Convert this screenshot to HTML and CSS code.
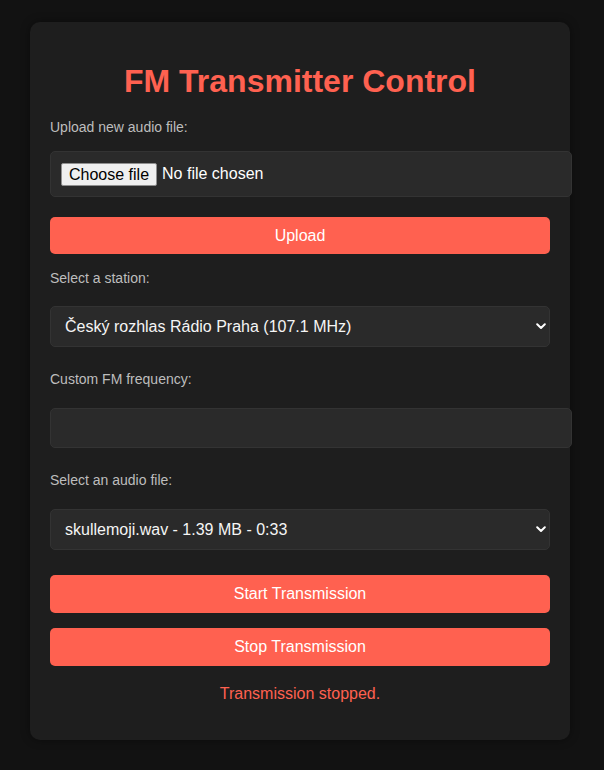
FILE: index.html
```html
<!DOCTYPE html>
<html lang="en">
<head>
<meta charset="utf-8">
<title>FM Transmitter Control</title>
<link rel="stylesheet" href="styles.css">
</head>
<body>
<div class="card">
  <h1 class="title">FM Transmitter Control</h1>

  <label class="label label-upload" for="file">Upload new audio file:</label>
  <label class="field file-field">
    <input type="file" id="file" class="file-input">
    <span class="file-btn">Choose file</span><span class="file-name">No file chosen</span>
  </label>
  <button class="btn btn-upload">Upload</button>

  <label class="label label-station" for="station">Select a station:</label>
  <div class="select-wrap select-station">
    <select id="station" class="field select">
      <option>Český rozhlas Rádio Praha (107.1 MHz)</option>
    </select>
    <svg class="chevron" viewBox="0 0 10 7" width="10" height="7" aria-hidden="true"><path d="M1.2 1.3 L5 5 L8.8 1.3" fill="none" stroke="#fff" stroke-width="2" stroke-linecap="round" stroke-linejoin="round"/></svg>
  </div>

  <label class="label label-freq" for="freq">Custom FM frequency:</label>
  <input type="text" id="freq" class="field text-field">

  <label class="label label-audio" for="audio">Select an audio file:</label>
  <div class="select-wrap select-audio">
    <select id="audio" class="field select">
      <option>skullemoji.wav - 1.39 MB - 0:33</option>
    </select>
    <svg class="chevron" viewBox="0 0 10 7" width="10" height="7" aria-hidden="true"><path d="M1.2 1.3 L5 5 L8.8 1.3" fill="none" stroke="#fff" stroke-width="2" stroke-linecap="round" stroke-linejoin="round"/></svg>
  </div>

  <button class="btn btn-start">Start Transmission</button>
  <button class="btn btn-stop">Stop Transmission</button>

  <p class="status">Transmission stopped.</p>
</div>
</body>
</html>
```

FILE: styles.css
```css
html, body {
  margin: 0;
  background: #121212;
}

body {
  padding: 22px 30px 30px;
  font-family: "Liberation Sans", Arial, sans-serif;
  color: #e0e0e0;
}

.card {
  width: 500px;
  padding: 20px;
  background: #1e1e1e;
  border-radius: 10px;
  box-shadow: 0 0 10px rgba(0, 0, 0, 0.4);
  display: flow-root;
}

.title {
  margin: 21px 0 19px;
  font-size: 32px;
  line-height: 37px;
  font-weight: bold;
  text-align: center;
  color: #ff6150;
}

.label {
  display: block;
  font-size: 14px;
  line-height: 16px;
  color: #bdbdbd;
}

.label-station { margin-top: 16px; }
.label-freq { margin-top: 24px; }
.label-audio { margin-top: 24px; }

.field {
  display: block;
  box-sizing: content-box;
  width: 500px;
  margin: 0;
  padding: 10px;
  background: #2a2a2a;
  border: 1px solid #333;
  border-radius: 5px;
  color: #f5f5f5;
  font-family: "Liberation Sans", Arial, sans-serif;
  font-size: 16px;
  outline: none;
}

.file-field {
  display: flex;
  align-items: center;
  margin-top: 16px;
  height: 24px;
  line-height: 18px;
  color: #fff;
  cursor: pointer;
}

.file-input {
  display: none;
}

.file-btn {
  box-sizing: border-box;
  height: 23px;
  margin-right: 5px;
  padding: 2px 7px;
  background: #efefef;
  border: 1px solid #8f8f8f;
  border-radius: 2px;
  color: #000;
  font-size: 16px;
  line-height: 18px;
}

.file-name {
  font-size: 16px;
}

.text-field {
  margin-top: 21px;
  height: 18px;
  line-height: 18px;
}

.select-wrap {
  position: relative;
  width: 500px;
}

.select-station { margin-top: 20px; }
.select-audio { margin-top: 21px; }

.select {
  -webkit-appearance: none;
  appearance: none;
  box-sizing: border-box;
  width: 500px;
  height: 41px;
  padding: 10px 24px 10px 14px;
  line-height: 19px;
}

.chevron {
  position: absolute;
  right: 4px;
  top: 17px;
  pointer-events: none;
}

.btn {
  display: block;
  box-sizing: border-box;
  width: 500px;
  height: 38px;
  margin: 0;
  padding: 10px;
  background: #ff6150;
  border: none;
  border-radius: 5px;
  color: #fff;
  font-family: "Liberation Sans", Arial, sans-serif;
  font-size: 16px;
  line-height: 18px;
  cursor: pointer;
}

.btn-upload { margin-top: 20px; height: 37px; }
.btn-start { margin-top: 25px; }
.btn-stop { margin-top: 15px; }

.status {
  margin: 19px 0 17px;
  font-size: 16px;
  line-height: 18px;
  text-align: center;
  color: #ff6150;
}
```
